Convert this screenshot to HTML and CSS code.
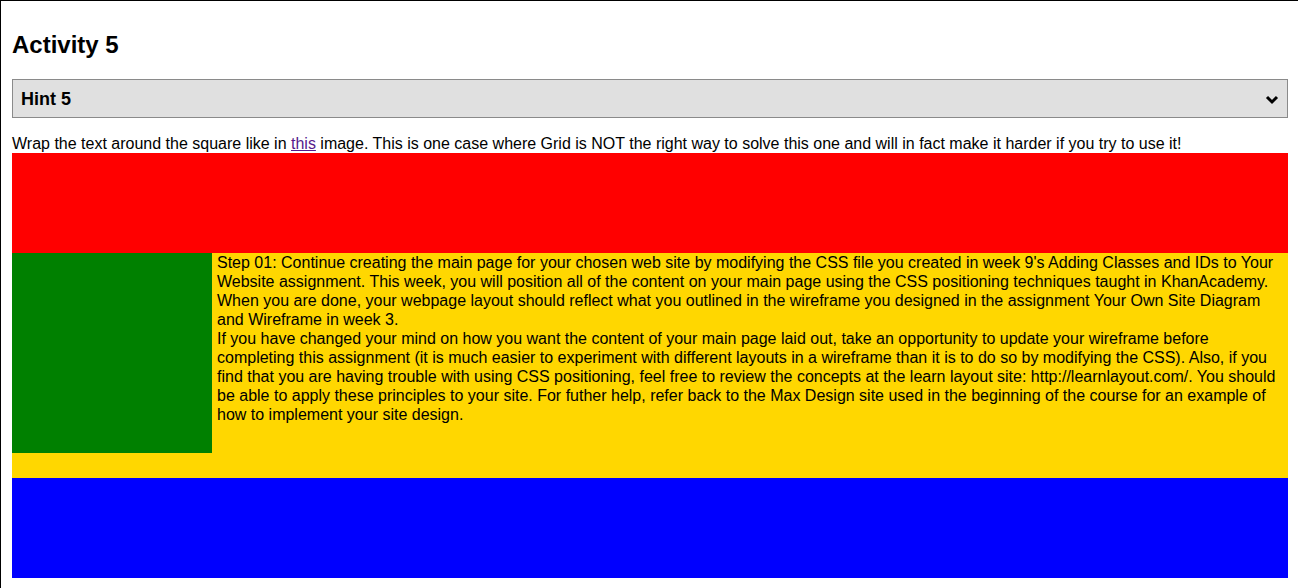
FILE: index.html
```html
<!DOCTYPE html>
<html>
<head>
<meta charset="utf-8">
<title>Activity 5</title>
<link rel="stylesheet" href="styles.css">
</head>
<body>
<div class="frame">
  <h2 class="title">Activity 5</h2>
  <details class="hint">
    <summary class="hint-summary"><span>Hint 5</span><svg class="chev" width="14" height="10" viewBox="0 0 14 10"><polyline points="2,2 7,7 12,2" fill="none" stroke="#000" stroke-width="3"/></svg></summary>
  </details>
  <p class="intro">Wrap the text around the square like in <a class="link" href="#">this</a> image. This is one case where Grid is NOT the right way to solve this one and will in fact make it harder if you try to use it!</p>
  <div class="red"></div>
  <div class="yellow">
    <div class="green"></div>
    <p class="copy">Step 01: Continue creating the main page for your chosen web site by modifying the CSS file you created in week 9's Adding Classes and IDs to Your Website assignment. This week, you will position all of the content on your main page using the CSS positioning techniques taught in KhanAcademy. When you are done, your webpage layout should reflect what you outlined in the wireframe you designed in the assignment Your Own Site Diagram and Wireframe in week 3.</p>
    <p class="copy">If you have changed your mind on how you want the content of your main page laid out, take an opportunity to update your wireframe before completing this assignment (it is much easier to experiment with different layouts in a wireframe than it is to do so by modifying the CSS). Also, if you find that you are having trouble with using CSS positioning, feel free to review the concepts at the learn layout site: http://learnlayout.com/. You should be able to apply these principles to your site. For futher help, refer back to the Max Design site used in the beginning of the course for an example of how to implement your site design.</p>
  </div>
  <div class="blue"></div>
</div>
</body>
</html>
```
FILE: styles.css
```css
html, body {
  margin: 0;
  padding: 0;
  background: #fff;
}
body {
  font-family: "Liberation Sans", Arial, sans-serif;
  font-size: 16px;
  color: #000;
}
.frame {
  border-left: 1px solid #000;
  border-top: 1px solid #000;
  padding: 0 10px 10px 11px;
}
.title {
  font-size: 24px;
  font-weight: bold;
  margin: 30px 0 20px;
}
.hint {
  margin: 0;
}
.hint-summary {
  list-style: none;
  display: flex;
  align-items: center;
  justify-content: space-between;
  background: #e0e0e0;
  border: 1px solid #8a8a8a;
  padding: 9px 8px 7px 8px;
  font-size: 18px;
  font-weight: bold;
  cursor: pointer;
}
.hint-summary::-webkit-details-marker {
  display: none;
}
.chev {
  display: block;
}
.intro {
  margin: 16px 0 0;
  line-height: 19px;
}
.link {
  color: #551a8b;
}
.red {
  height: 100px;
  background: #ff0000;
}
.yellow {
  display: flow-root;
  background: #ffd700;
  padding-bottom: 25px;
}
.green {
  float: left;
  width: 200px;
  height: 200px;
  background: #008000;
  margin-right: 5px;
}
.copy {
  margin: 0;
  line-height: 19px;
}
.blue {
  height: 100px;
  background: #0000ff;
}
```
